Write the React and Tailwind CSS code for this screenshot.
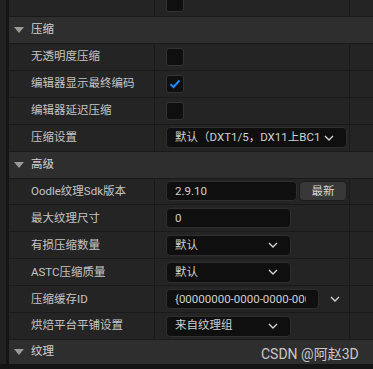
import React from "react";

const font = { fontFamily: 'Roboto, "Noto Sans CJK SC", sans-serif' };

function Chevron({ className = "" }) {
  return (
    <svg width="10" height="6" viewBox="0 0 10 6" className={className}>
      <path d="M1 1 L5 5 L9 1" fill="none" stroke="#d0d0d0" strokeWidth="1.4" />
    </svg>
  );
}

function Checkbox({ checked }) {
  return (
    <div className="w-[18px] h-[18px] shrink-0 rounded-[3px] bg-[#0f0f0f] border border-[#333] flex items-center justify-center">
      {checked && (
        <svg width="12" height="10" viewBox="0 0 12 10">
          <path d="M1.5 5.2 L4.6 8 L10.5 1.5" fill="none" stroke="#1f8bff" strokeWidth="2" />
        </svg>
      )}
    </div>
  );
}

function Input({ w, pr = "pr-[4px]", children }) {
  return (
    <div className={`${w} ${pr} h-[20px] rounded-[4px] bg-[#0f0f0f] border border-[#2e2e2e] pl-[8px] flex items-center text-[#d0d0d0] text-[11.5px]`}>
      <div className="flex-1 overflow-hidden whitespace-nowrap">{children}</div>
    </div>
  );
}

function Select({ w, children }) {
  return (
    <div className={`${w} h-[21px] rounded-[4px] bg-[#0f0f0f] border border-[#2e2e2e] pl-[8px] pr-[12px] flex items-center gap-[4px] text-[#d0d0d0] text-[11.5px]`}>
      <div className="flex-1 overflow-hidden whitespace-nowrap">{children}</div>
      <Chevron />
    </div>
  );
}

function Header({ title, h = "h-[27px]" }) {
  return (
    <div className={`${h} bg-[#2e2e2e] border-b border-[#1a1a1a] flex items-center pl-[5px] gap-[7px]`}>
      <svg width="10" height="6" viewBox="0 0 10 6">
        <path d="M0 0 H10 L5 6 Z" fill="#9a9a9a" />
      </svg>
      <span className="text-[#d2d2d2] text-[11.5px]">{title}</span>
    </div>
  );
}

function Row({ label, children }) {
  return (
    <div className="h-[27px] flex border-b border-[#1a1a1a] bg-[#242424]">
      <div className="w-[146px] shrink-0 border-r border-[#1a1a1a] pl-[22px] flex items-center text-[#c4c4c4] text-[11.5px] whitespace-nowrap">
        {label}
      </div>
      <div className="w-[195px] shrink-0 border-r border-[#1a1a1a] pl-[11px] flex items-center">
        {children}
      </div>
      <div className="flex-1" />
    </div>
  );
}

export default function App() {
  return (
    <div className="relative w-[373px] h-[369px] overflow-hidden bg-[#141414] flex flex-col" style={font}>
      <div className="flex h-[364px]">
        <div className="w-[6px] bg-[#212121]" />
        <div className="w-[3px] bg-[#141414]" />
        <div className="flex-1 flex flex-col overflow-hidden bg-[#242424]">
          <div className="h-[17px] shrink-0 flex border-b border-[#1a1a1a] overflow-hidden">
            <div className="w-[146px] shrink-0 border-r border-[#1a1a1a]" />
            <div className="w-[195px] shrink-0 border-r border-[#1a1a1a] pl-[11px] flex items-end pb-[4px]">
              <Checkbox />
            </div>
          </div>

          <Header title="压缩" />
          <Row label="无透明度压缩"><Checkbox /></Row>
          <Row label="编辑器显示最终编码"><Checkbox checked /></Row>
          <Row label="编辑器延迟压缩"><Checkbox /></Row>
          <Row label="压缩设置">
            <Select w="w-[181px]">默认（DXT1/5，DX11上BC1/3）</Select>
          </Row>

          <Header title="高级" />
          <Row label="Oodle纹理Sdk版本">
            <div className="flex gap-[2px]">
              <Input w="w-[131px]">2.9.10</Input>
              <div className="w-[48px] h-[20px] rounded-[4px] bg-[#383838] border border-[#1c1c1c] flex items-center justify-center text-[#d6d6d6] text-[11.5px]">
                最新
              </div>
            </div>
          </Row>
          <Row label="最大纹理尺寸"><Input w="w-[125px]">0</Input></Row>
          <Row label="有损压缩数量"><Select w="w-[125px]">默认</Select></Row>
          <Row label="ASTC压缩质量"><Select w="w-[125px]">默认</Select></Row>
          <Row label="压缩缓存ID">
            <div className="flex items-center">
              <Input w="w-[153px]" pr="pr-[12px]">{"{00000000-0000-0000-0000-000000000000}"}</Input>
              <Chevron className="ml-[11px]" />
            </div>
          </Row>
          <Row label="烘焙平台平铺设置"><Select w="w-[125px]">来自纹理组</Select></Row>

          <Header title="纹理" h="h-[24px] border-b-0" />
        </div>
      </div>

      <div className="absolute left-[261px] top-[344px] text-[#c8c8c8] text-[14px]" style={font}>
        CSDN @阿赵3D
      </div>
    </div>
  );
}
